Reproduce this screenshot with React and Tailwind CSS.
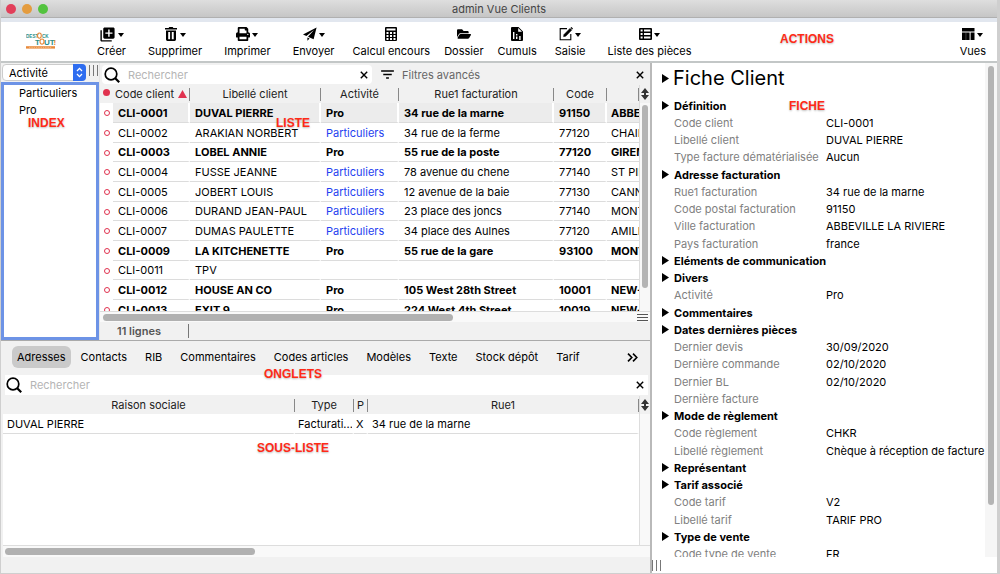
import React from "react";
import { MdLibraryAdd, MdFilterList } from "react-icons/md";
import { FaFolderOpen, FaPrint } from "react-icons/fa";

const TrashIcon = () => (
  <svg viewBox="0 0 14 14" className="h-[14px] w-[14px]" fill="currentColor">
    <path d="M1 1h3.6l.7-1h3.4l.7 1H13v1.6H1z" />
    <path fillRule="evenodd" d="M2 3.4h10V12.6a1.4 1.4 0 0 1-1.4 1.4H3.4A1.4 1.4 0 0 1 2 12.6zM4.2 5v7.2h1.9V5zM7.8 5v7.2h1.9V5z" />
  </svg>
);
const PlaneIcon = () => (
  <svg viewBox="0 0 14 14" className="h-[14px] w-[14px]" fill="currentColor">
    <path d="M13.6.4 0 7.4l3.4 1.5L11 3 5 9.7l5.6 2.6zM4.4 10.4v3.4l2.2-2.4z" />
  </svg>
);
const CalculatorIcon = () => (
  <svg viewBox="0 0 12 14" className="h-[14px] w-[12px]" fill="currentColor">
    <path fillRule="evenodd" d="M1 0h10a1 1 0 0 1 1 1v12a1 1 0 0 1-1 1H1a1 1 0 0 1-1-1V1a1 1 0 0 1 1-1zM1.5 1.5v2h9v-2zM1.5 5v2h2V5zM5 5v2h2V5zM8.5 5v2h2V5zM1.5 8v2h2V8zM5 8v2h2V8zM8.5 8v2h2V8zM1.5 11v2h2v-2zM5 11v2h2v-2zM8.5 11v2h2v-2z" />
  </svg>
);
const FileChartIcon = () => (
  <svg viewBox="0 0 12 14" className="h-[14px] w-[12px]" fill="currentColor">
    <path fillRule="evenodd" d="M1 0h6.5L12 4.5V13a1 1 0 0 1-1 1H1a1 1 0 0 1-1-1V1a1 1 0 0 1 1-1zM7.2 1v3.8H11zM2 5v7h1.4V5zM5 7v1.4h1.4V7zM5 9.6v2.4h1.4V9.6zM8.2 9v4h1.4V9z" />
  </svg>
);
const EditIcon = () => (
  <svg viewBox="0 0 14 14" className="h-[14px] w-[14px]" fill="none" stroke="currentColor">
    <path d="M8 1.6H1.2v11.2h10.6V7" strokeWidth="1.1" />
    <path d="M4.6 9.6 5 7.6 11 1.4l1.7 1.7L6.7 9.2z" fill="currentColor" strokeWidth=".6" />
    <path d="m12 .4 1.6 1.6" strokeWidth="1.2" />
  </svg>
);
const TableIcon = () => (
  <svg viewBox="0 0 13 12" className="h-[12px] w-[13px]" fill="currentColor">
    <path fillRule="evenodd" d="M1 0h11a1 1 0 0 1 1 1v10a1 1 0 0 1-1 1H1a1 1 0 0 1-1-1V1a1 1 0 0 1 1-1zM1.6 1.6v2h2v-2zM5 1.6v2h6.4v-2zM1.6 5v2h2V5zM5 5v2h6.4V5zM1.6 8.4v2h2v-2zM5 8.4v2h6.4v-2z" />
  </svg>
);
const ViewsIcon = () => (
  <svg viewBox="0 0 13 12" className="h-[12px] w-[13px]" fill="currentColor">
    <path d="M0 0h12.5v3.4H0zM0 4.4h7.6V12H0zM8.6 4.4h3.9V12H8.6z" />
    <path d="M3.6 4.4h.7V12h-.7z" fill="#fff" opacity=".35" />
  </svg>
);
const Caret = () => (
  <svg viewBox="0 0 6 4" className="mt-px h-1 w-1.5" fill="currentColor"><path d="M0 0h6L3 4z" /></svg>
);
const Cross = () => (
  <svg viewBox="0 0 8 8" className="h-2 w-2" stroke="#000" strokeWidth="1.4"><path d="m.8.8 6.4 6.4M7.2.8.8 7.2" /></svg>
);
const SearchIcon = () => (
  <svg viewBox="0 0 16 16" className="h-4 w-4 shrink-0" fill="none" stroke="#000">
    <circle cx="7" cy="7" r="5.8" strokeWidth="1.7" /><path d="m11 11 4.2 4.2" strokeWidth="2.2" />
  </svg>
);
const UpDown = () => (
  <svg viewBox="0 0 8 12" className="h-3 w-2" fill="#333"><path d="M4 0 8 5H5v2h3L4 12 0 7h3V5H0z" /></svg>
);
const Triangle = () => (
  <svg viewBox="0 0 7 9" className="h-[9px] w-[7px] shrink-0" fill="#000"><path d="M0 0 7 4.5 0 9z" /></svg>
);
const Grip = () => (
  <div className="flex h-[11px] w-[9px] shrink-0 justify-between">
    <i className="w-px bg-[#777]" /><i className="w-px bg-[#777]" /><i className="w-px bg-[#777]" />
  </div>
);

const Note = ({ className, children }) => (
  <span className={"pointer-events-none absolute z-10 font-['Liberation_Sans',sans-serif] text-[12px] leading-[14px] font-bold text-[#ff2a17] [text-shadow:0_1px_2px_#bbb] " + className}>
    {children}
  </span>
);

const Action = ({ icon, label, caret }) => (
  <button className={"flex shrink-0 flex-col items-center " + (caret ? "px-[11px]" : "px-[7px]")}>
    <span className="flex h-4 items-center gap-0.5">{icon}{caret && <Caret />}</span>
    <span className="mt-0.5 leading-[14px] whitespace-nowrap">{label}</span>
  </button>
);

const Logo = () => (
  <svg viewBox="0 0 30 18" className="h-[18px] w-[30px]" role="img" aria-label="Destock Tout">
    <g fontFamily="Liberation Sans, sans-serif" fontWeight="700">
      <text x="0" y="6" fontSize="4.6" fill="#2b8f8b">DEST</text>
      <text x="16" y="6" fontSize="4.6" fill="#2b8f8b">CK</text>
      <text x="9" y="12.6" fontSize="8" fill="#2b8f8b">T</text>
      <text x="18" y="12.6" fontSize="8" fill="#2b8f8b">UT</text>
      <text x="27.4" y="12.6" fontSize="8" fill="#e8893a">!</text>
    </g>
    <g fill="none" stroke="#e8893a" strokeWidth="1.1">
      <ellipse cx="13.4" cy="3.6" rx="1.9" ry="2.6" /><ellipse cx="16" cy="9.6" rx="2" ry="2.6" />
    </g>
    <path d="M0 14.2h29v2.4H0z" fill="#e8893a" />
    <path d="M3 15.4h23" stroke="#f8d3b0" strokeWidth=".6" strokeDasharray="1.5 .8" />
  </svg>
);

const clients = [
  ["CLI-0001", "DUVAL PIERRE", "Pro", "34 rue de la marne", "91150", "ABBEVILLE"],
  ["CLI-0002", "ARAKIAN NORBERT", "Particuliers", "34 rue de la ferme", "77120", "CHAILLY"],
  ["CLI-0003", "LOBEL ANNIE", "Pro", "55 rue de la poste", "77120", "GIREMOUTIERS"],
  ["CLI-0004", "FUSSE JEANNE", "Particuliers", "78 avenue du chene", "77140", "ST PIERRE"],
  ["CLI-0005", "JOBERT LOUIS", "Particuliers", "12 avenue de la baie", "77130", "CANNES"],
  ["CLI-0006", "DURAND JEAN-PAUL", "Particuliers", "23 place des joncs", "77140", "MONTCOURT"],
  ["CLI-0007", "DUMAS PAULETTE", "Particuliers", "34 place des Aulnes", "77120", "AMILLIS"],
  ["CLI-0009", "LA KITCHENETTE", "Pro", "55 rue de la gare", "93100", "MONTREUIL"],
  ["CLI-0011", "TPV", "", "", "", ""],
  ["CLI-0012", "HOUSE AN CO", "Pro", "105 West 28th Street", "10001", "NEW-YORK"],
  ["CLI-0013", "EXIT 9", "Pro", "224 West 4th Street", "10019", "NEW-YORK"],
];

const fiche = [
  ["Définition"],
  ["Code client", "CLI-0001"],
  ["Libellé client", "DUVAL PIERRE"],
  ["Type facture dématérialisée", "Aucun"],
  ["Adresse facturation"],
  ["Rue1 facturation", "34 rue de la marne"],
  ["Code postal facturation", "91150"],
  ["Ville facturation", "ABBEVILLE LA RIVIERE"],
  ["Pays facturation", "france"],
  ["Eléments de communication"],
  ["Divers"],
  ["Activité", "Pro"],
  ["Commentaires"],
  ["Dates dernières pièces"],
  ["Dernier devis", "30/09/2020"],
  ["Dernière commande", "02/10/2020"],
  ["Dernier BL", "02/10/2020"],
  ["Dernière facture", ""],
  ["Mode de règlement"],
  ["Code règlement", "CHKR"],
  ["Libellé règlement", "Chèque à réception de facture"],
  ["Représentant"],
  ["Tarif associé"],
  ["Code tarif", "V2"],
  ["Libellé tarif", "TARIF PRO"],
  ["Type de vente"],
  ["Code type de vente", "FR"],
];

const tabs = ["Adresses", "Contacts", "RIB", "Commentaires", "Codes articles", "Modèles", "Texte", "Stock dépôt", "Tarif"];

const Th = ({ children }) => (
  <th scope="col" className="p-0 font-normal">
    <div className="flex h-[13px] items-center justify-center gap-1 border-r border-[#888] whitespace-nowrap">{children}</div>
  </th>
);

function ClientList() {
  return (
    <section className="flex min-w-0 flex-1 flex-col bg-[#f1f1f1]">
      <div className="mt-px flex h-[21px] shrink-0 items-center">
        <label className="ml-0.5 flex h-[19px] w-[270px] items-center rounded-sm bg-white pr-1">
          <span className="ml-0.5"><SearchIcon /></span>
          <input aria-label="Rechercher un client" placeholder="Rechercher" className="ml-2 w-0 flex-1 bg-transparent outline-none placeholder:text-[#b5b5b5]" />
          <button aria-label="Effacer la recherche"><Cross /></button>
        </label>
        <MdFilterList className="ml-[7px] h-[17px] w-[17px]" />
        <button className="ml-1.5 text-[#666]">Filtres avancés</button>
        <button aria-label="Fermer les filtres" className="mr-1.5 ml-auto"><Cross /></button>
      </div>
      <div className="flex min-h-0 flex-1">
        <div className="min-w-0 flex-1 overflow-hidden bg-white">
          <table className="w-full table-fixed border-separate border-spacing-0">
            <colgroup>
              <col className="w-[13px]" /><col className="w-[77px]" /><col className="w-[131px]" /><col className="w-[78px]" />
              <col className="w-[155px]" /><col className="w-[53px]" /><col />
            </colgroup>
            <thead className="bg-[#f1f1f1] text-[#222]">
              <tr className="h-[18px]">
                <th className="p-0" aria-label="État"><div className="mb-1 ml-[3px] h-[7px] w-[7px] rounded-full bg-[#e0324f]" /></th>
                <Th>Code client <svg viewBox="0 0 9 8" className="h-2 w-[9px]" fill="#e0324f"><path d="M4.5 0 9 8H0z" /></svg></Th>
                <Th>Libellé client</Th><Th>Activité</Th><Th>Rue1 facturation</Th><Th>Code</Th><Th> </Th>
              </tr>
            </thead>
            <tbody>
              {clients.map((row, i) => {
                const pro = row[2] === "Pro";
                return (
                  <tr key={row[0]} className={"h-5 nth-[3n]:h-[19px] " + (pro ? "font-bold" : "")}>
                    <td className="p-0"><div className="ml-1 h-1.5 w-1.5 rounded-full border border-[#e0324f]" /></td>
                    {row.map((v, j) => (
                      <td key={j} className={"overflow-hidden border-b border-r-white border-b-[#dcdcdc] p-0 leading-4 whitespace-nowrap " + (j < 5 ? "border-r-2 pl-[5px] " : "pl-1 ") + (i === 0 ? "bg-[#ececec] " : "") + (j === 2 && !pro ? "text-[#1f3ff0]" : "")}>{v}</td>
                    ))}
                  </tr>
                );
              })}
            </tbody>
          </table>
        </div>
        <div className="flex w-[11px] shrink-0 flex-col items-center border-l border-[#ddd] bg-[#f8f8f8]">
          <div className="flex h-[18px] w-full shrink-0 items-center justify-center bg-[#f1f1f1]"><UpDown /></div>
          <div className="mt-0.5 h-[183px] w-1.5 rounded-full bg-[#b4b4b4]" />
        </div>
      </div>
      <div className="flex h-[11px] shrink-0 items-center border-t border-[#ddd] bg-[#f9f9f9]">
        <div className="ml-[3px] h-[7px] w-[350px] rounded-full bg-[#b1b1b1]" />
        <div className="mr-0.5 ml-auto flex h-[9px] w-[11px] flex-col justify-around">
          <i className="h-px bg-[#555]" /><i className="h-px bg-[#555]" /><i className="h-px bg-[#555]" />
        </div>
      </div>
      <div className="flex h-[18px] shrink-0 items-center">
        <div className="w-[89px] border-r border-[#777] pl-[17px] font-semibold text-[#555]">11 lignes</div>
      </div>
    </section>
  );
}

function SubList() {
  return (
    <section className="relative flex min-h-0 flex-1 flex-col bg-[#f1f1f1]">
      <nav className="flex h-8 shrink-0 items-center pl-[11px]">
        {tabs.map((t, i) => (
          <button key={t} className={"h-[22px] shrink-0 whitespace-nowrap " + (i === 0 ? "mr-2.5 rounded-md bg-[#cacaca] px-[5px]" : "mr-[18px]")}>{t}</button>
        ))}
        <button aria-label="Plus d'onglets" className="mr-3 ml-auto">
          <svg viewBox="0 0 11 9" className="h-[9px] w-[11px]" fill="none" stroke="#000" strokeWidth="1.6"><path d="m1 .6 3.8 3.9L1 8.4M6 .6l3.8 3.9L6 8.4" /></svg>
        </button>
      </nav>
      <label className="mt-0.5 mr-0.5 ml-1 flex h-5 shrink-0 items-center bg-white">
        <span className="ml-px"><SearchIcon /></span>
        <input aria-label="Rechercher une adresse" placeholder="Rechercher" className="ml-2 w-0 flex-1 bg-transparent outline-none placeholder:text-[#b5b5b5]" />
        <button aria-label="Effacer" className="mr-1"><Cross /></button>
      </label>
      <div className="mt-px ml-0.5 flex min-h-0 flex-1">
        <div className="min-w-0 flex-1 overflow-hidden bg-white">
          <table className="w-full table-fixed border-separate border-spacing-0">
            <colgroup><col className="w-[292px]" /><col className="w-[59px]" /><col className="w-[14px]" /><col /></colgroup>
            <thead className="bg-[#f1f1f1] text-[#222]">
              <tr className="h-[18px]"><Th>Raison sociale</Th><Th>Type</Th><Th>P</Th><Th>Rue1</Th></tr>
            </thead>
            <tbody>
              <tr className="h-5">
                {["DUVAL PIERRE", "Facturati...", "X", "34 rue de la marne"].map((v, i) => (
                  <td key={v} className={"overflow-hidden border-r-2 border-b border-r-white border-b-[#dcdcdc] p-0 leading-4 whitespace-nowrap " + (i === 2 ? "pl-0.5" : i === 1 ? "pl-[3px]" : "pl-1")}>{v}</td>
                ))}
              </tr>
            </tbody>
          </table>
        </div>
        <div className="w-[11px] shrink-0 border-l border-[#ddd] bg-[#f9f9f9]">
          <div className="flex h-[18px] items-center justify-center bg-[#f1f1f1]"><UpDown /></div>
        </div>
      </div>
      <div className="ml-0.5 flex h-3 shrink-0 items-center border-t border-[#ddd] bg-[#f9f9f9]">
        <div className="ml-0.5 h-[7px] w-[250px] rounded-full bg-[#b1b1b1]" />
      </div>
      <div className="h-4 shrink-0" />
      <Note className="top-[26px] left-[263px]">ONGLETS</Note>
      <Note className="top-[100px] left-[256px]">SOUS-LISTE</Note>
    </section>
  );
}

function Fiche() {
  return (
    <section className="relative flex min-h-0 min-w-0 flex-col bg-white">
      <div className="flex min-h-0 flex-1">
        <div className="min-w-0 flex-1 overflow-hidden pl-[10px]">
          <button className="mb-1 flex h-[30px] items-center gap-1 text-[20px]"><Triangle />Fiche Client</button>
          <dl>
            {fiche.map(([label, value]) => (
              <div key={label} className="flex h-[17px] items-center whitespace-nowrap nth-[4n]:h-[18px]">
                {value === undefined ? (
                  <dt><button className="flex items-center gap-[5px] font-bold"><Triangle />{label}</button></dt>
                ) : (
                  <>
                    <dt className="w-[164px] shrink-0 pl-3 text-[#808080]">{label}</dt>
                    <dd>{value}</dd>
                  </>
                )}
              </div>
            ))}
          </dl>
        </div>
        <div className="flex w-3 shrink-0 justify-center bg-[#f6f6f6]">
          <div className="mt-[3px] h-[439px] w-1.5 rounded-full bg-[#b4b4b4]" />
        </div>
      </div>
      <div className="flex h-4 shrink-0 items-center"><Grip /></div>
      <Note className="top-[36px] left-[137px]">FICHE</Note>
    </section>
  );
}

export default function App() {
  return (
    <div className="flex h-screen flex-col overflow-hidden border-r-3 border-b border-l border-[#cfcfcf] bg-white font-[Inter,sans-serif] text-[11px] leading-[14px] text-black">
      <header className="relative flex h-[18px] shrink-0 items-center justify-center border-b border-[#b0b0b0] bg-linear-to-b from-[#dedede] to-[#c6c6c6] text-[#444]">
        <div className="absolute left-[5px] flex gap-[6px]">
          <i className="h-[10px] w-[10px] rounded-full bg-[#e23f5a]" />
          <i className="h-[10px] w-[10px] rounded-full bg-[#e49c3f]" />
          <i className="h-[10px] w-[10px] rounded-full bg-[#53c33f]" />
        </div>
        <h1>admin Vue Clients</h1>
      </header>
      <div className="relative flex h-[45px] shrink-0 items-start border-t-4 border-b-2 border-t-[#e2e7ef] border-b-[#c3c7c7] pt-1">
        <div className="flex w-[85px] shrink-0 justify-start pt-1.5 pl-[25px]"><Logo /></div>
        <Action caret label="Créer" icon={<MdLibraryAdd className="h-[17px] w-[17px]" />} />
        <Action caret label="Supprimer" icon={<TrashIcon />} />
        <Action caret label="Imprimer" icon={<FaPrint className="h-[14px] w-[14px]" />} />
        <Action caret label="Envoyer" icon={<PlaneIcon />} />
        <Action label="Calcul encours" icon={<CalculatorIcon />} />
        <Action label="Dossier" icon={<FaFolderOpen className="h-[14px] w-[14px]" />} />
        <Action label="Cumuls" icon={<FileChartIcon />} />
        <Action caret label="Saisie" icon={<EditIcon />} />
        <Action caret label="Liste des pièces" icon={<TableIcon />} />
        <div className="ml-auto"><Action caret label="Vues" icon={<ViewsIcon />} /></div>
        <Note className="top-[10px] left-[779px]">ACTIONS</Note>
      </div>
      <main className="grid min-h-0 flex-1 grid-cols-[minmax(0,651fr)_minmax(0,345fr)]">
        <div className="flex min-h-0 flex-col border-r-2 border-[#b9b9b9]">
          <div className="relative flex h-[278px] shrink-0 border-b border-[#aaa]">
            <aside className="flex w-[98px] shrink-0 flex-col bg-[#f1f1f1]">
              <div className="flex h-[19px] shrink-0 items-center pl-px">
                <div className="relative h-[17px] w-[84px]">
                  <select aria-label="Index" className="h-[17px] w-full appearance-none rounded-sm border border-[#ccc] bg-white pl-1.5 leading-[14px]">
                    <option>Activité</option>
                  </select>
                  <span className="pointer-events-none absolute top-0 right-0 flex h-[17px] w-[13px] items-center justify-center rounded-r-sm bg-[#2e6df0]">
                    <svg viewBox="0 0 7 11" className="h-[11px] w-[7px]" fill="none" stroke="#fff" strokeWidth="1.3"><path d="m1 4 2.5-2.6L6 4M1 7l2.5 2.6L6 7" /></svg>
                  </span>
                </div>
                <span className="mb-1 ml-[3px]"><Grip /></span>
              </div>
              <ul className="flex-1 border-3 border-[#6d93e6] bg-white pl-[15px] leading-[17px]">
                <li>Particuliers</li>
                <li>Pro</li>
              </ul>
            </aside>
            <div className="w-px shrink-0 bg-[#e6e6e6]" />
            <ClientList />
            <Note className="top-[53px] left-[27px]">INDEX</Note>
            <Note className="top-[53px] left-[275px]">LISTE</Note>
          </div>
          <SubList />
        </div>
        <Fiche />
      </main>
    </div>
  );
}
